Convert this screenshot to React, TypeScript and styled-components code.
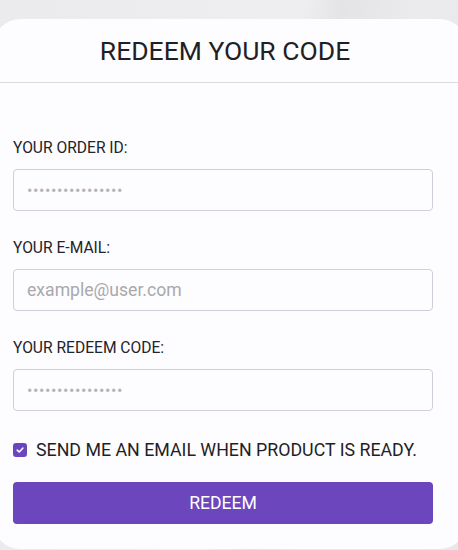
import React from 'react';
import styled, { createGlobalStyle } from 'styled-components';

const GlobalStyle = createGlobalStyle`
  html, body {
    margin: 0;
    padding: 0;
    height: 100%;
    overflow: hidden;
  }
  body {
    font-family: Roboto, 'Liberation Sans', sans-serif;
    background: linear-gradient(100deg, #ebeaed 0%, #eeedf0 55%, #e4e3e6 62%, #ebeaed 75%, #e8e7ea 100%);
  }
`;

export default function App() {
  return (
    <Page>
      <GlobalStyle />
      <Card>
        <Header>
          <h1>REDEEM YOUR CODE</h1>
        </Header>
        <Form onSubmit={(e) => e.preventDefault()}>
          <Field>
            <Label htmlFor='order'>YOUR ORDER ID:</Label>
            <Input id='order' type='password' placeholder='••••••••••••••••' $dots />
          </Field>
          <Field>
            <Label htmlFor='email'>YOUR E-MAIL:</Label>
            <Input id='email' type='email' placeholder='example@user.com' />
          </Field>
          <Field>
            <Label htmlFor='code'>YOUR REDEEM CODE:</Label>
            <Input id='code' type='password' placeholder='••••••••••••••••' $dots />
          </Field>
          <CheckRow>
            <input type='checkbox' defaultChecked />
            <Box>
              <svg width='10' height='10' viewBox='0 0 10 10'>
                <path d='M2.2 5.2 L4.2 7 L7.8 3.2' fill='none' stroke='#fff' strokeWidth='1.6' strokeLinecap='round' strokeLinejoin='round' />
              </svg>
            </Box>
            SEND ME AN EMAIL WHEN PRODUCT IS READY.
          </CheckRow>
          <Button type='submit'>REDEEM</Button>
        </Form>
      </Card>
    </Page>
  );
}

const Page = styled.div`
  padding-top: 19px;
  height: 531px;
  overflow: hidden;
`;

const Card = styled.div`
  margin-left: -6px;
  width: 472px;
  height: 530px;
  background: #fdfcfe;
  border-radius: 26px;
  box-sizing: border-box;
`;

const Header = styled.div`
  height: 63px;
  display: flex;
  align-items: center;
  justify-content: center;
  border-bottom: 1px solid #dcdbde;
  padding-right: 10px;
  h1 {
    margin: 0;
    font-size: 26.5px;
    font-weight: 400;
    color: #1f1f24;
  }
`;

const Form = styled.form`
  display: flex;
  flex-direction: column;
  padding: 56px 0 0 19px;
  width: 420px;
  box-sizing: content-box;
`;

const Field = styled.div`
  display: flex;
  flex-direction: column;
  gap: 12px;
  margin-bottom: 28px;
`;

const Label = styled.label`
  font-size: 15.6px;
  line-height: 18px;
  color: #23232a;
`;

const Input = styled.input<{ $dots?: boolean }>`
  height: 42px;
  box-sizing: border-box;
  border: 1px solid #cfcfdb;
  border-radius: 4px;
  background: #fdfcfe;
  padding: 0 13px;
  font-family: Roboto, 'Liberation Sans', sans-serif;
  font-size: 17.6px;
  color: #333;
  outline: none;
  &::placeholder {
    color: ${(p) => (p.$dots ? '#b4b4b8' : '#a9a9ad')};
    font-size: ${(p) => (p.$dots ? '16px' : '17.6px')};
    letter-spacing: ${(p) => (p.$dots ? '0.6px' : '0')};
  }
`;

const CheckRow = styled.label`
  display: flex;
  align-items: center;
  gap: 9px;
  margin-top: 1px;
  font-size: 17.8px;
  line-height: 20px;
  color: #1f1f26;
  input {
    display: none;
  }
`;

const Box = styled.span`
  width: 14px;
  height: 14px;
  border-radius: 3px;
  background: #6b47bf;
  display: flex;
  align-items: center;
  justify-content: center;
  flex-shrink: 0;
`;

const Button = styled.button`
  margin-top: 22px;
  height: 42px;
  border: none;
  border-radius: 4px;
  background: #6b46bd;
  color: #fff;
  font-family: Roboto, 'Liberation Sans', sans-serif;
  font-size: 17.6px;
  cursor: pointer;
`;
